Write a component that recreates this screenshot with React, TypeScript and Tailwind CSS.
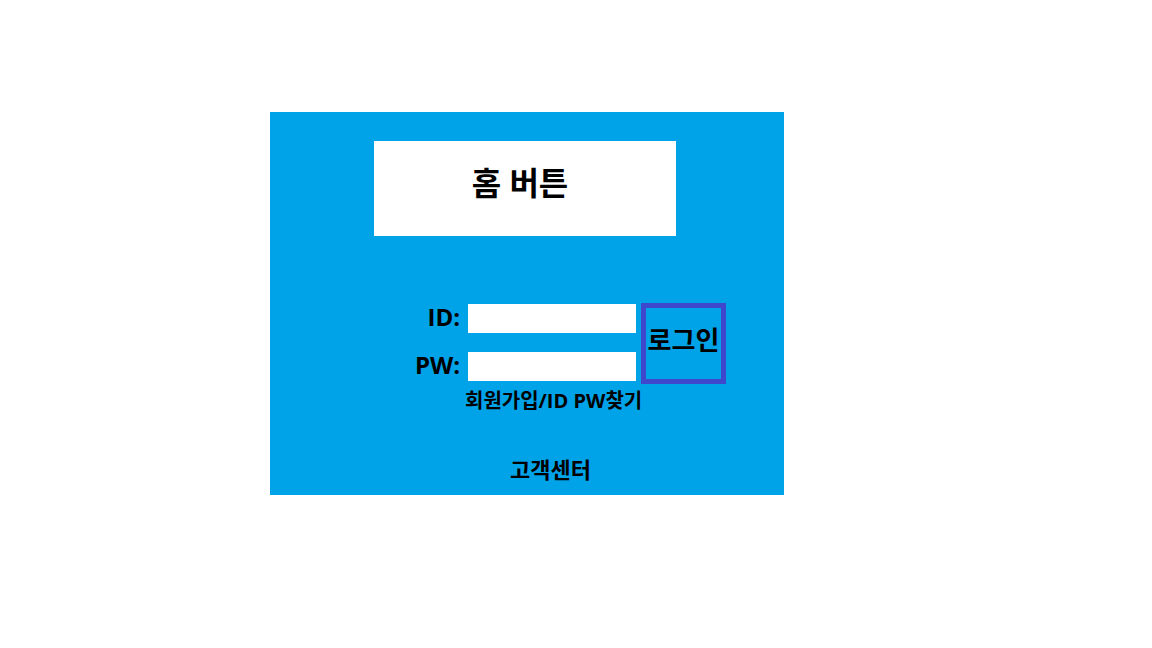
import type { ReactNode } from "react";

function Field({ id, label, type, children }: { id: string; label: string; type: string; children?: ReactNode }) {
  return (
    <div className="flex items-center justify-end gap-2">
      <label htmlFor={id} className="pb-1 text-2xl leading-6 font-bold">
        {label}
      </label>
      <input id={id} type={type} className="h-[29px] w-[168px] bg-white px-2 text-base outline-none" />
      {children}
    </div>
  );
}

export default function App() {
  return (
    <div className="min-h-screen bg-white pt-28 pl-[270px] font-['Open_Sans','Noto_Sans_CJK_KR',sans-serif] text-black">
      <main className="flex w-full max-w-[514px] flex-col bg-[#00a2e8] pt-[29px] pb-3">
        <button type="button" className="ml-[104px] h-[95px] w-[302px] bg-white pr-[10px] pb-3 text-[32px] font-bold">
          홈 버튼
        </button>

        <form className="mt-[67px] mr-[58px] flex justify-end gap-[5px]" onSubmit={(e) => e.preventDefault()}>
          <div className="flex flex-col gap-[19px] pt-px">
            <Field id="user-id" label="ID:" type="text" />
            <Field id="user-pw" label="PW:" type="password" />
          </div>
          <button
            type="submit"
            className="h-[81px] w-[85px] border-5 border-[#3f48cc] pb-1.5 text-[26px] font-bold whitespace-nowrap"
          >
            로그인
          </button>
        </form>

        <a href="#account" className="mt-[5px] ml-[195px] self-start text-xl leading-6 font-bold whitespace-nowrap">
          회원가입/ID PW찾기
        </a>
        <a href="#support" className="mt-[42px] ml-[240px] self-start text-[22px] leading-7 font-bold whitespace-nowrap">
          고객센터
        </a>
      </main>
    </div>
  );
}
